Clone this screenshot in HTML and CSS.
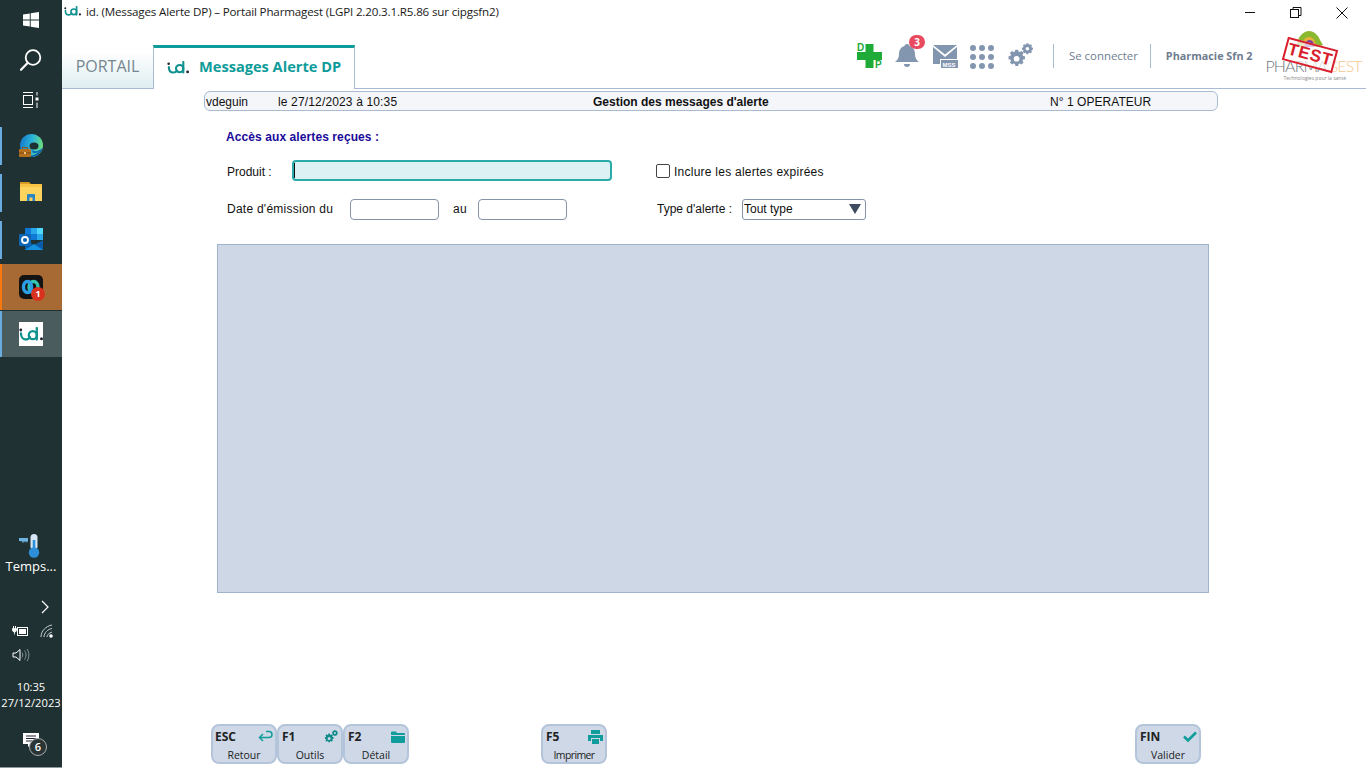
FILE: index.html
```html
<!DOCTYPE html>
<html lang="fr">
<head>
<meta charset="utf-8">
<title>id. (Messages Alerte DP) – Portail Pharmagest</title>
<link rel="stylesheet" href="styles.css">
</head>
<body>
<svg class="defs" width="0" height="0" aria-hidden="true">
  <defs>
    <symbol id="idlogo" viewBox="0 0 24 14">
      <circle cx="1.800" cy="3" r="1.400" fill="#223"/>
      <path d="M2 6.500c0 3.700 2 6 4.800 6 1.700 0 3.200-.8 4.200-2.200" fill="none" stroke="currentColor" stroke-width="2.300" stroke-linecap="round"/>
      <circle cx="13.800" cy="8.200" r="4" fill="none" stroke="currentColor" stroke-width="2.300"/>
      <path d="M17.800 1v11.500" fill="none" stroke="currentColor" stroke-width="2.300" stroke-linecap="round"/>
      <circle cx="22.500" cy="11.800" r="1.500" fill="#223"/>
    </symbol>
    <symbol id="gears" viewBox="0 0 26 26">
      <path d="M10 8l1.600.5 1.600-1.200 2.200 2.200-1.200 1.600.6 1.600 2 .3v3l-2 .3-.6 1.600 1.200 1.600-2.200 2.200-1.600-1.200-1.600.6-.3 2h-3l-.3-2-1.600-.6-1.600 1.200L.9 19.500l1.200-1.600-.6-1.600-2-.3v-3l2-.3.6-1.600-1.200-1.600L3.100 7.300l1.600 1.200L6.300 8l.3-2h3zM8 12.500a3 3 0 100 6 3 3 0 000-6z" fill="currentColor" fill-rule="evenodd" transform="translate(1 1) scale(.95)"/>
      <path d="M19 0l.4 1.500 1.200.5 1.400-.8 1.700 1.700-.8 1.400.5 1.200 1.500.4v2.300l-1.500.4-.5 1.200.8 1.400-1.700 1.700-1.400-.8-1.200.5-.4 1.500h-2.300l-.4-1.500-1.200-.5-1.400.8-1.700-1.700.8-1.400-.5-1.200-1.500-.4V5.900l1.500-.4.5-1.200-.8-1.400 1.700-1.700 1.400.8 1.200-.5.4-1.500zm-1.200 4.800a2.300 2.300 0 100 4.600 2.300 2.300 0 000-4.600z" fill="currentColor" fill-rule="evenodd" transform="translate(5.500 .2) scale(.78)"/>
    </symbol>
  </defs>
</svg>

<div class="screen">
  <aside class="taskbar">
    <div class="sys-icons">
      <div class="sys-cell">
        <svg width="16" height="16" viewBox="0 0 16 16"><path d="M0 2.500l6.800-1v6.100H0zM7.700 1.300L16 0v7.600H7.700zM0 8.500h6.800v6.100L0 13.500zM7.700 8.500H16V16l-8.300-1.300z" fill="#fff"/></svg>
      </div>
      <div class="sys-cell">
        <svg width="24" height="24" viewBox="0 0 24 24"><circle cx="14" cy="9.500" r="7.300" fill="none" stroke="#fff" stroke-width="1.800"/><path d="M8.800 14.800L2 21.800" stroke="#fff" stroke-width="2.200" stroke-linecap="round"/></svg>
      </div>
      <div class="sys-cell">
        <svg width="16" height="16" viewBox="0 0 16 16"><path d="M0 .5h10M0 15.500h10" stroke="#fff" fill="none"/><rect x=".5" y="3.500" width="9" height="9" fill="none" stroke="#fff"/><rect x="12.500" y="5.500" width="3" height="3" fill="#fff"/><path d="M14 0v3.500M14 10.500v5.500" stroke="#fff"/></svg>
      </div>
    </div>

    <div class="app">
      <span class="app-bar"></span>
      <svg class="app-icon" width="24" height="24" viewBox="0 0 24 24">
        <defs><linearGradient id="edgeg" x1="0" y1=".3" x2="1" y2=".5"><stop offset="0" stop-color="#1578c9"/><stop offset=".5" stop-color="#2bb4d8"/><stop offset="1" stop-color="#6fe07a"/></linearGradient></defs>
        <circle cx="12.500" cy="11.500" r="11.500" fill="url(#edgeg)"/>
        <path d="M24 13c-1 6-6 10-11 10-2 0-4-.5-5-1.500 6 1 12-2 16-8.500z" fill="#0c5ea8"/>
        <ellipse cx="15" cy="12" rx="4.500" ry="3.500" fill="#1f3132"/>
        <path d="M12 15c2 3 7 3 11-1-1 3-5 6-9 5z" fill="#0d6fbe"/>
        <rect x="0" y="15" width="12" height="8" rx="1" fill="#b5701f"/>
        <rect x="0" y="18.500" width="12" height="1" fill="#7c4712"/>
        <rect x="5" y="18" width="2" height="2" fill="#f3c36f"/>
        <path d="M3.500 15v-1.500h5V15" fill="none" stroke="#8a5216"/>
      </svg>
    </div>
    <div class="app">
      <span class="app-bar"></span>
      <svg class="app-icon" width="24" height="24" viewBox="0 0 24 24">
        <path d="M1 1h9l2 2h-11z" fill="#d69a25"/>
        <rect x="1" y="3" width="22" height="17" fill="#fbd35d"/>
        <rect x="1" y="3" width="22" height="3" fill="#f6c343"/>
        <path d="M8 20v-6a1 1 0 011-1h6a1 1 0 011 1v6h-2.500v-3.500h-3V20z" fill="#2a84c6"/>
      </svg>
    </div>
    <div class="app">
      <span class="app-bar"></span>
      <svg class="app-icon" width="24" height="24" viewBox="0 0 24 24">
        <rect x="6" y="0" width="18" height="12" fill="#28a8ea"/>
        <rect x="6" y="0" width="6" height="6" fill="#0f78d4"/>
        <rect x="12" y="6" width="6" height="6" fill="#0f78d4"/>
        <rect x="18" y="0" width="6" height="6" fill="#50d9ff"/>
        <path d="M6 12l9 5 9-5v10H6z" fill="#0a5ca8"/>
        <path d="M6 22l9-6 9 6z" fill="#1490df"/>
        <rect x="0" y="6" width="12" height="12" rx="1" fill="#0b67b5"/>
        <circle cx="6" cy="12" r="3" fill="none" stroke="#fff" stroke-width="1.800"/>
      </svg>
    </div>
    <div class="app app-attn">
      <span class="app-bar"></span>
      <div class="app-icon webex">
        <svg width="24" height="24" viewBox="0 0 24 24">
          <rect width="24" height="24" rx="5" fill="#141414"/>
          <ellipse cx="14.500" cy="12" rx="4.500" ry="5.500" fill="none" stroke="#33c4b0" stroke-width="3.400"/>
          <ellipse cx="8.500" cy="12" rx="4" ry="5.500" fill="none" stroke="#2a9fe8" stroke-width="3.400"/>
        </svg>
        <span class="webex-badge">1</span>
      </div>
    </div>
    <div class="app app-current">
      <span class="app-bar"></span>
      <svg class="app-icon id-tile" width="24" height="24" viewBox="0 0 24 24"><rect width="24" height="24" fill="#fff"/><use href="#idlogo" x="0" y="5" width="24" height="14" color="#11918f"/></svg>
    </div>

    <div class="weather">
      <svg width="24" height="24" viewBox="0 0 24 24">
        <rect x="12.500" y="0" width="7" height="16" rx="3.500" fill="#d5e7f5"/>
        <circle cx="16" cy="18.500" r="5.200" fill="#2e8fd8"/>
        <rect x="14.700" y="6" width="2.600" height="12" fill="#2e8fd8"/>
        <path d="M1 4h9v2.500l-1 2.500-1-2-1 1.500-1-1.500-1 2.500-1-2.500-1 .5-1-.5-1 0z" fill="#6fb3e0"/>
      </svg>
      <div class="weather-text">Temps...</div>
    </div>

    <div class="tray-chevron">
      <svg width="10" height="14" viewBox="0 0 10 14"><path d="M2 1l6 6-6 6" fill="none" stroke="#fff" stroke-width="1.200"/></svg>
    </div>
    <div class="tray-row">
      <svg width="16" height="12" viewBox="0 0 16 12"><path d="M1.500 1v2.500M3.500 1v2.500" stroke="#fff"/><path d="M.5 3.500h4v1.500a2 2 0 01-4 0zM2.500 7v2.500" fill="#fff" stroke="#fff" stroke-width=".8"/><rect x="5.500" y="2.500" width="10" height="8" fill="none" stroke="#fff"/><rect x="7" y="4" width="7" height="5" fill="#fff"/></svg>
      <svg width="14" height="14" viewBox="0 0 14 14"><path d="M1 13C1 7 6 2 12 1M4 13C4 9 8 5 12 4.500M7 13c0-2 2-4 5-5" fill="none" stroke="#c8d0d0"/><circle cx="11" cy="12" r="1.800" fill="#fff"/></svg>
    </div>
    <div class="tray-row">
      <svg width="18" height="14" viewBox="0 0 18 14"><path d="M1 5h3l4-3.500v11L4 9H1z" fill="none" stroke="#fff"/><path d="M10 4.500c1 1.500 1 3.500 0 5M12.500 2.500c2 3 2 6 0 9M15 1c2.500 3.500 2.500 8.500 0 12" fill="none" stroke="#8b9696"/></svg>
    </div>
    <div class="clock">
      <div>10:35</div>
      <div>27/12/2023</div>
    </div>
    <div class="notif">
      <svg width="16" height="14" viewBox="0 0 16 14"><path d="M0 0h16v11H8l-3 3v-3H0z" fill="#fff"/><path d="M3 3h10M3 5.500h10M3 8h10" stroke="#223" stroke-width="1"/></svg>
      <span class="notif-badge">6</span>
    </div>
  </aside>

  <main class="app-window">
    <header class="titlebar">
      <svg class="title-logo" width="17" height="10" viewBox="0 0 24 14"><use href="#idlogo" color="#11918f"/></svg>
      <span class="title-text">id. (Messages Alerte DP) – Portail Pharmagest (LGPI 2.20.3.1.R5.86 sur cipgsfn2)</span>
      <div class="winctl">
        <button class="winbtn" aria-label="Réduire"><svg width="12" height="12" viewBox="0 0 12 12"><path d="M1 5.500h10" stroke="#111"/></svg></button>
        <button class="winbtn" aria-label="Restaurer"><svg width="12" height="12" viewBox="0 0 12 12"><rect x=".5" y="2.500" width="8" height="8" fill="none" stroke="#111"/><path d="M3 2.500V.5h8v8H8.500" fill="none" stroke="#111"/></svg></button>
        <button class="winbtn" aria-label="Fermer"><svg width="12" height="12" viewBox="0 0 12 12"><path d="M.5.500l11 11M11.500.5l-11 11" stroke="#111"/></svg></button>
      </div>
    </header>

    <nav class="tabbar">
      <div class="tab tab-portail">PORTAIL</div>
      <div class="tab tab-active">
        <svg class="tab-logo" width="22" height="13" viewBox="0 0 24 14"><use href="#idlogo" color="#11918f"/></svg>
        <span>Messages Alerte DP</span>
      </div>
      <div class="tools">
        <svg class="tool" width="26" height="26" viewBox="0 0 26 26">
          <path d="M8.500 1h8v8h8.500v8h-8.500v8h-8v-8H0V9h8.500z" fill="#1fab37"/>
          <rect x="0" y="0" width="8" height="9" fill="#fff"/>
          <rect x="17" y="17" width="9" height="9" fill="#fff"/>
          <text x="0" y="7.500" class="dp-letter">D</text>
          <text x="18" y="25" class="dp-letter">P</text>
        </svg>
        <div class="tool bell">
          <svg width="24" height="24" viewBox="0 0 24 24"><path d="M12 1c1.500 0 2.500 1 2.500 2 3.500 1 5.500 4 5.500 8 0 4 1.500 6 4 8H0c2.500-2 4-4 4-8 0-4 2-7 5.500-8C9.500 2 10.500 1 12 1z" fill="#8396b0"/><path d="M9 21h6a3 3 0 01-6 0z" fill="#8396b0"/></svg>
          <span class="bell-badge">3</span>
        </div>
        <svg class="tool" width="25" height="23" viewBox="0 0 25 23">
          <path d="M0 0h24L12 9.500z" fill="#8396b0"/>
          <path d="M0 2v17h7v-5h17V2L12 12z" fill="#8396b0"/>
          <rect x="8" y="15" width="17" height="8" fill="#8396b0"/>
          <text x="9.500" y="21.500" class="mss">MSS</text>
        </svg>
        <div class="tool dots"><i></i><i></i><i></i><i></i><i></i><i></i><i></i><i></i><i></i></div>
        <svg class="tool tool-gears" width="26" height="26"><use href="#gears" color="#8396b0"/></svg>
        <span class="sep sep-first"></span>
        <span class="tool-text">Se connecter</span>
        <span class="sep sep-second"></span>
        <span class="tool-text tool-strong">Pharmacie Sfn 2</span>
        <div class="brand">
          <svg class="brand-dome" width="30" height="18" viewBox="0 0 30 18">
            <path d="M3 17C3 6 10 1 15 1c5 0 10 5 11 9l3 5-5 2z" fill="#8ab82e"/>
            <path d="M8 17c0-6 3-10 7-10s7 4 7 10z" fill="#e8b23a"/>
            <path d="M10.500 17c0-4 2-7 5-7s5 3 5 7z" fill="#7a3fa0"/>
          </svg>
          <div class="brand-name"><span>PHARMA</span><em>GEST</em></div>
          <div class="brand-sub">Technologies pour la santé</div>
          <div class="stamp">TEST</div>
        </div>
      </div>
    </nav>

    <section class="infobar">
      <span class="info-user">vdeguin</span>
      <span class="info-date">le 27/12/2023 à 10:35</span>
      <strong class="info-title">Gestion des messages d'alerte</strong>
      <span class="info-op">N° 1 OPERATEUR</span>
    </section>

    <h1 class="form-heading">Accès aux alertes reçues :</h1>

    <div class="form-row row-product">
      <label class="lbl lbl-product">Produit :</label>
      <div class="field field-product"><span class="caret"></span></div>
      <span class="check"></span>
      <span class="lbl">Inclure les alertes expirées</span>
    </div>

    <div class="form-row row-date">
      <label class="lbl lbl-date">Date d'émission du</label>
      <div class="field field-date"></div>
      <span class="lbl lbl-au">au</span>
      <div class="field field-date"></div>
      <span class="lbl lbl-type">Type d'alerte :</span>
      <div class="select">
        <span>Tout type</span>
        <svg width="12" height="10" viewBox="0 0 12 10"><path d="M0 0h12L6 10z" fill="#3f4b5e"/></svg>
      </div>
    </div>

    <div class="results"></div>

    <footer class="fnkeys">
      <button class="fn">
        <span class="fn-top"><b>ESC</b><svg width="15" height="13" viewBox="0 0 15 13"><path d="M5 4L1.500 7.500 5 11M2 7.500h9c2.500 0 3-1.500 3-3s-1-3-3-3H8" fill="none" stroke="#119d9b" stroke-width="1.500"/></svg></span>
        <span class="fn-label">Retour</span>
      </button>
      <button class="fn">
        <span class="fn-top"><b>F1</b><svg width="15" height="14"  viewBox="0 0 26 26"><use href="#gears" color="#0e8b89"/></svg></span>
        <span class="fn-label">Outils</span>
      </button>
      <button class="fn">
        <span class="fn-top"><b>F2</b><svg width="14" height="12" viewBox="0 0 14 12"><path d="M0 1.500A1 1 0 011 .5h4l1 1.500h7a1 1 0 011 1V4H0z" fill="#119d9b"/><path d="M0 5h14v6a1 1 0 01-1 1H1a1 1 0 01-1-1z" fill="#119d9b"/></svg></span>
        <span class="fn-label">Détail</span>
      </button>
      <button class="fn fn-print">
        <span class="fn-top"><b>F5</b><svg width="15" height="14" viewBox="0 0 15 14"><path d="M3 0h9v4H3z" fill="#119d9b"/><path d="M0 5h15v6h-3V8H3v3H0z" fill="#119d9b"/><path d="M4 9h7v5H4z" fill="#119d9b"/></svg></span>
        <span class="fn-label">Imprimer</span>
      </button>
      <button class="fn fn-valid">
        <span class="fn-top"><b>FIN</b><svg width="14" height="11" viewBox="0 0 14 11"><path d="M1 5.500l4 4 8-8" fill="none" stroke="#119d9b" stroke-width="2.600"/></svg></span>
        <span class="fn-label">Valider</span>
      </button>
    </footer>
  </main>
</div>
</body>
</html>
```

FILE: styles.css
```css
* { box-sizing: border-box; }
html, body { margin: 0; height: 100%; overflow: hidden; }
body { font-family: "Liberation Sans", Arial, sans-serif; background: #fff; color: #111; }
.defs { position: absolute; }
.screen { display: flex; width: 1366px; height: 768px; }

/* Task bar */
.taskbar { width: 62px; flex: none; background: #1f3132; color: #fff; display: flex; flex-direction: column; font-family: "Open Sans", "Noto Sans", sans-serif; border-bottom: 1px solid #8d9899; }
.sys-icons { height: 123px; flex: none; display: flex; flex-direction: column; }
.sys-cell { height: 40px; display: flex; align-items: center; justify-content: center; }
.app { height: 46px; margin-bottom: 1px; display: flex; align-items: center; flex: none; }
.app-bar { width: 2px; height: 38px; background: #69ade0; flex: none; }
.app-icon { margin-left: 17px; flex: none; display: block; }
.app-attn { background: #a86a35; }
.app-attn .app-bar { background: #f7780d; height: 46px; }
.app-current { background: #4b5c5e; }
.app-current .app-bar { height: 46px; }
.webex { position: relative; width: 24px; height: 24px; }
.webex svg { display: block; }
.webex-badge { position: absolute; left: 12px; top: 12px; width: 14px; height: 14px; border-radius: 50%; background: #d8321e; font-size: 9px; line-height: 14px; text-align: center; font-weight: 700; }
.weather { margin-top: 176px; display: flex; flex-direction: column; align-items: center; height: 41px; flex: none; }
.weather svg { display: block; margin-right: 2px; }
.weather-text { font-size: 13px; line-height: 17px; }
.tray-chevron { margin-top: 24px; height: 16px; display: flex; justify-content: flex-end; padding-right: 12px; align-items: center; }
.tray-row { margin-top: 8px; height: 16px; display: flex; align-items: center; gap: 12px; padding-left: 12px; }
.clock { margin-top: 16px; text-align: center; font-size: 11.200px; line-height: 16px; white-space: nowrap; }
.notif { position: relative; margin: 22px 0 0 23px; width: 16px; height: 14px; }
.notif svg { display: block; }
.notif-badge { position: absolute; left: 6px; top: 5px; width: 18px; height: 18px; border-radius: 50%; background: #2a3435; border: 1px solid #a8b0b0; font-size: 11px; line-height: 16px; text-align: center; font-weight: 600; }

/* Window */
.app-window { flex: 1; min-width: 0; display: flex; flex-direction: column; background: #fff; }
.titlebar { height: 45px; flex: none; display: flex; align-items: flex-start; font-family: "Open Sans", sans-serif; font-size: 11.600px; padding-left: 2px; }
.title-logo { margin-top: 6px; flex: none; }
.title-text { margin-left: 5px; margin-top: 3px; line-height: 17px; white-space: nowrap; color: #1a1a1a; letter-spacing: -.16px; }
.winctl { margin-left: auto; display: flex; padding-right: 3px; }
.winbtn { width: 46px; height: 22px; padding: 3px 0 0 3px; border: 0; background: none; display: flex; align-items: center; justify-content: center; }
.winbtn svg { display: block; }

.tabbar { height: 44px; flex: none; display: flex; font-family: "Open Sans", sans-serif; }
.tab { display: flex; align-items: center; }
.tab-portail { width: 91px; justify-content: center; padding: 0 0 1px 0; background: linear-gradient(#fff 15%, #deeef0); color: #75868f; font-size: 16px; border-bottom: 1px solid #a9bbd3; }
.tab-active { width: 202px; border-top: 3px solid #0e9c9a; border-left: 1px solid #a9bbd3; border-right: 1px solid #a9bbd3; padding: 0 0 6px 13px; gap: 10px; color: #0e9c9a; font-weight: 700; font-size: 14.600px; white-space: nowrap; }
.tab-logo { flex: none; margin-top: 4px; }
.tools { flex: 1; min-width: 0; display: flex; align-items: flex-start; border-bottom: 1px solid #a9bbd3; padding-left: 502px; }
.tool { flex: none; margin-top: -2px; display: block; }
.tool + .tool { margin-left: 13px; }
.bell { position: relative; width: 24px; height: 24px; }
.tool + .bell { margin-left: 12px; }
.bell svg { display: block; }
.bell-badge { position: absolute; left: 14px; top: -8px; width: 16px; height: 14px; border-radius: 7px; background: #ea4a5f; color: #fff; font-size: 10px; line-height: 14px; text-align: center; font-weight: 700; }
.tool.bell + .tool { margin-top: 0; margin-left: 14px; }
.mss { font: 700 6px "Liberation Sans", sans-serif; fill: #fff; }
.dp-letter { font: 700 10px "Liberation Sans", sans-serif; fill: #1fab37; }
.tool.dots { width: 24px; height: 24px; display: grid; grid-template-columns: repeat(3, 6px); gap: 3px; margin-top: 0; }
.tool + .tool.dots { margin-left: 12px; }
.dots i { width: 6px; height: 6px; border-radius: 50%; background: #8396b0; }
.tool + .tool-gears { margin-left: 14px; }
.sep { flex: none; width: 1px; height: 24px; background: #a9bbd3; margin-top: -1px; }
.sep-first { margin-left: 19px; }
.sep-second { margin-left: 12px; }
.tool-text { flex: none; font-size: 11.400px; line-height: 22px; color: #6f7d90; margin-left: 15px; white-space: nowrap; }
.tool-strong { font-weight: 700; font-size: 10.800px; color: #6f7d90; }
.brand { position: relative; flex: none; width: 94px; height: 50px; margin: -15px 0 0 13px; }
.brand-dome { position: absolute; left: 28px; top: 0; }
.brand-name { position: absolute; left: 0; top: 27px; font-family: "Lato", "Liberation Sans", sans-serif; font-weight: 300; font-size: 16px; line-height: 18px; color: #6e7479; white-space: nowrap; letter-spacing: -.9px; }
.brand-name em { font-style: normal; color: #f5c68f; }
.brand-sub { position: absolute; left: 18px; top: 45px; font-size: 5px; line-height: 7px; color: #888; white-space: nowrap; }
.stamp { position: absolute; left: 18px; top: 13px; width: 52px; height: 24px; transform: rotate(15deg); border: 2px solid #d91f2e; color: #d91f2e; font: 700 17px/20px "Liberation Sans", sans-serif; text-align: center; letter-spacing: .5px; background: rgba(255,255,255,.7); }

/* Info bar */
.infobar { margin: 2px 0 0 142px; width: 1014px; height: 20px; flex: none; display: flex; align-items: center; padding-top: 1px; border: 1px solid #a9bbd3; border-radius: 6px; background: #f4f6fa; font-size: 12px; white-space: nowrap; }
.info-user { width: 73px; padding-left: 1px; }
.info-date { width: 315px; letter-spacing: .15px; }
.info-title { width: 457px; }
.info-op { letter-spacing: .05px; }

/* Form */
.form-heading { margin: 18px 0 0 164px; height: 16px; font-size: 12px; line-height: 16px; font-weight: 700; color: #1a0a9a; flex: none; letter-spacing: .09px; }
.form-row { display: flex; align-items: center; flex: none; }
.lbl { font-size: 12px; letter-spacing: .25px; white-space: nowrap; color: #111; }
.row-product { margin: 15px 0 0 165px; height: 22px; }
.row-product .lbl { padding-top: 1px; }
.lbl-product { width: 65px; letter-spacing: 0; }
.field { border-radius: 4px; border: 1px solid #8594a8; background: #fff; flex: none; }
.field-product { width: 320px; height: 21px; margin-top: -1px; background: #dcf1f3; border: 2px solid #2aabaa; display: flex; align-items: center; }
.caret { width: 1px; height: 15px; background: #111; }
.check { width: 14px; height: 14px; border: 1px solid #444; border-radius: 2px; margin: 0 4px 0 44px; flex: none; }
.row-date { margin: 16px 0 0 165px; height: 22px; }
.lbl-date { width: 123px; }
.field-date { width: 89px; height: 21px; }
.lbl-au { width: 39px; text-align: center; padding-left: 3px; }
.lbl-type { margin-left: 90px; width: 85px; letter-spacing: 0; }
.select { width: 124px; height: 21px; flex: none; display: flex; align-items: center; justify-content: space-between; border: 1px solid #8594a8; border-radius: 3px; padding: 0 4px 0 1px; font-size: 12px; }
.results { margin: 24px 0 0 155px; width: 992px; height: 349px; flex: none; background: #ced7e6; border: 1px solid #a0b3cc; }

/* Function keys */
.fnkeys { margin: auto 0 4px 149px; display: flex; flex: none; }
.fn { width: 66px; height: 40px; padding: 0; border: 2px solid #b4c4da; border-radius: 8px; background: #ced8e7; display: flex; flex-direction: column; font-family: "Open Sans", sans-serif; color: #222; }
.fn-top { display: flex; align-items: center; justify-content: space-between; width: 100%; height: 20px; padding: 2px 2px 0 3px; }
.fn:first-child .fn-top b { margin-left: -1px; }
.fn-top b { font-size: 12px; font-weight: 700; color: #222; }
.fn-top svg { flex: none; }
.fn-label { display: block; width: 100%; text-align: center; font-size: 10.500px; line-height: 15px; margin-top: 3px; }
.fn-print { margin-left: 132px; }
.fn-print .fn-label { letter-spacing: -.6px; }
.fn-valid { margin-left: 528px; }
```
